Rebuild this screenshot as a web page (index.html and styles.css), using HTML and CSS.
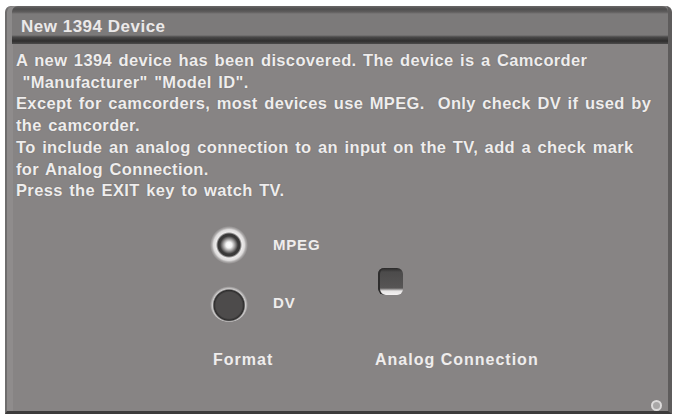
FILE: index.html
```html
<!DOCTYPE html>
<html lang="en">
<head>
    <meta charset="UTF-8">
    <title>New 1394 Device</title>
    <link rel="stylesheet" href="styles.css">
</head>
<body>
    <div class="panel">
        <div class="title-bar">
            <span class="title">New 1394 Device</span>
        </div>

        <div class="panel-body">
            <div class="message">
                <p>A new 1394 device has been discovered. The device is a Camcorder</p>
                <p>&nbsp;"Manufacturer" "Model ID".</p>
                <p>Except for camcorders, most devices use MPEG.&nbsp; Only check DV if used by</p>
                <p>the camcorder.</p>
                <p>To include an analog connection to an input on the TV, add a check mark</p>
                <p>for Analog Connection.</p>
                <p>Press the EXIT key to watch TV.</p>
            </div>

            <div class="options">
                <div class="option-group format-group">
                    <div class="radio-list">
                        <div class="radio-row">
                            <span class="radio radio-on"></span>
                            <span class="radio-label">MPEG</span>
                        </div>
                        <div class="radio-row">
                            <span class="radio"></span>
                            <span class="radio-label">DV</span>
                        </div>
                    </div>
                    <div class="group-label">Format</div>
                </div>

                <div class="option-group analog-group">
                    <div class="check-area">
                        <span class="checkbox"></span>
                    </div>
                    <div class="group-label">Analog Connection</div>
                </div>
            </div>

            <span class="corner-dot"></span>
        </div>
    </div>
</body>
</html>
```

FILE: styles.css
```css
* {
    box-sizing: border-box;
    margin: 0;
    padding: 0;
}

body {
    background-color: #ffffff;
    font-family: "Liberation Sans", Arial, sans-serif;
    font-weight: bold;
    color: #efeded;
    padding: 6px 4px 3px 5px;
}

.panel {
    height: 408px;
    background-color: #878484;
    border-left: 2px solid #6f6d6d;
    border-right: 4px solid #5e5c5c;
    border-bottom: 3px solid #3c3b3b;
    border-radius: 6px 6px 0 0;
    display: flex;
    flex-direction: column;
}

.title-bar {
    height: 38px;
    background: linear-gradient(to bottom, #6a6868 0, #4f4e4e 3px, #5f5d5d 6px, #7c7a7a 8px, #7c7a7a 29px, #4a4949 31px, #2f2e2e 35px, #4c4b4b 38px);
    border-radius: 6px 6px 0 0;
    padding: 11px 0 0 14px;
    box-shadow: inset 5px 0 0 #8c8a8a;
}

.title {
    font-size: 17px;
    letter-spacing: 0.5px;
    color: #ebe9e9;
}

.panel-body {
    position: relative;
    flex: 1;
    padding: 6px 0 0 9px;
    box-shadow: inset 6px 0 0 #8f8c8c;
}

.message p {
    font-size: 16.5px;
    line-height: 21.7px;
    letter-spacing: 0.35px;
    word-spacing: 1.6px;
    white-space: nowrap;
    text-shadow: 0 0 1px rgba(60, 60, 60, 0.5);
}

.options {
    display: flex;
    padding-left: 194px;
    margin-top: 24px;
}

.format-group {
    width: 165px;
}

.radio-list {
    display: flex;
    flex-direction: column;
    gap: 20px;
    height: 125px;
}

.radio-row {
    display: flex;
    align-items: center;
    gap: 25px;
    height: 38px;
}

.radio {
    width: 38px;
    height: 38px;
    border-radius: 50%;
    background: radial-gradient(circle at 50% 56%, #4d4b4b 0, #4d4b4b 13px, #2d2c2c 15px, #cfcdcd 16.5px, rgba(200, 198, 198, 0) 19px);
}

.radio-on {
    background: radial-gradient(circle, #ffffff 0, #f2f2f2 3px, #9a9898 6px, #3a3939 9px, #3a3939 11px, #eeecec 13px, #dddbdb 15.5px, rgba(220, 218, 218, 0.45) 17px, rgba(135, 132, 132, 0) 19px);
}

.radio-label {
    font-size: 15px;
    letter-spacing: 0.8px;
}

.group-label {
    font-size: 16px;
    letter-spacing: 1px;
}

.format-group .group-label {
    padding-left: 3px;
}

.check-area {
    height: 125px;
    padding: 42px 0 0 3px;
}

.checkbox {
    display: block;
    width: 25px;
    height: 27px;
    border-radius: 6px;
    background: linear-gradient(to bottom, #2a2929 0, #4c4b4b 4px, #575555 20px, #e6e4e4 23px, #f4f2f2 27px);
    box-shadow: inset 2px 0 0 #2e2d2d;
}

.corner-dot {
    position: absolute;
    right: 6px;
    bottom: 0;
    width: 11px;
    height: 11px;
    border-radius: 50%;
    border: 2px solid #dcdada;
    background-color: #a9a7a7;
}
```
